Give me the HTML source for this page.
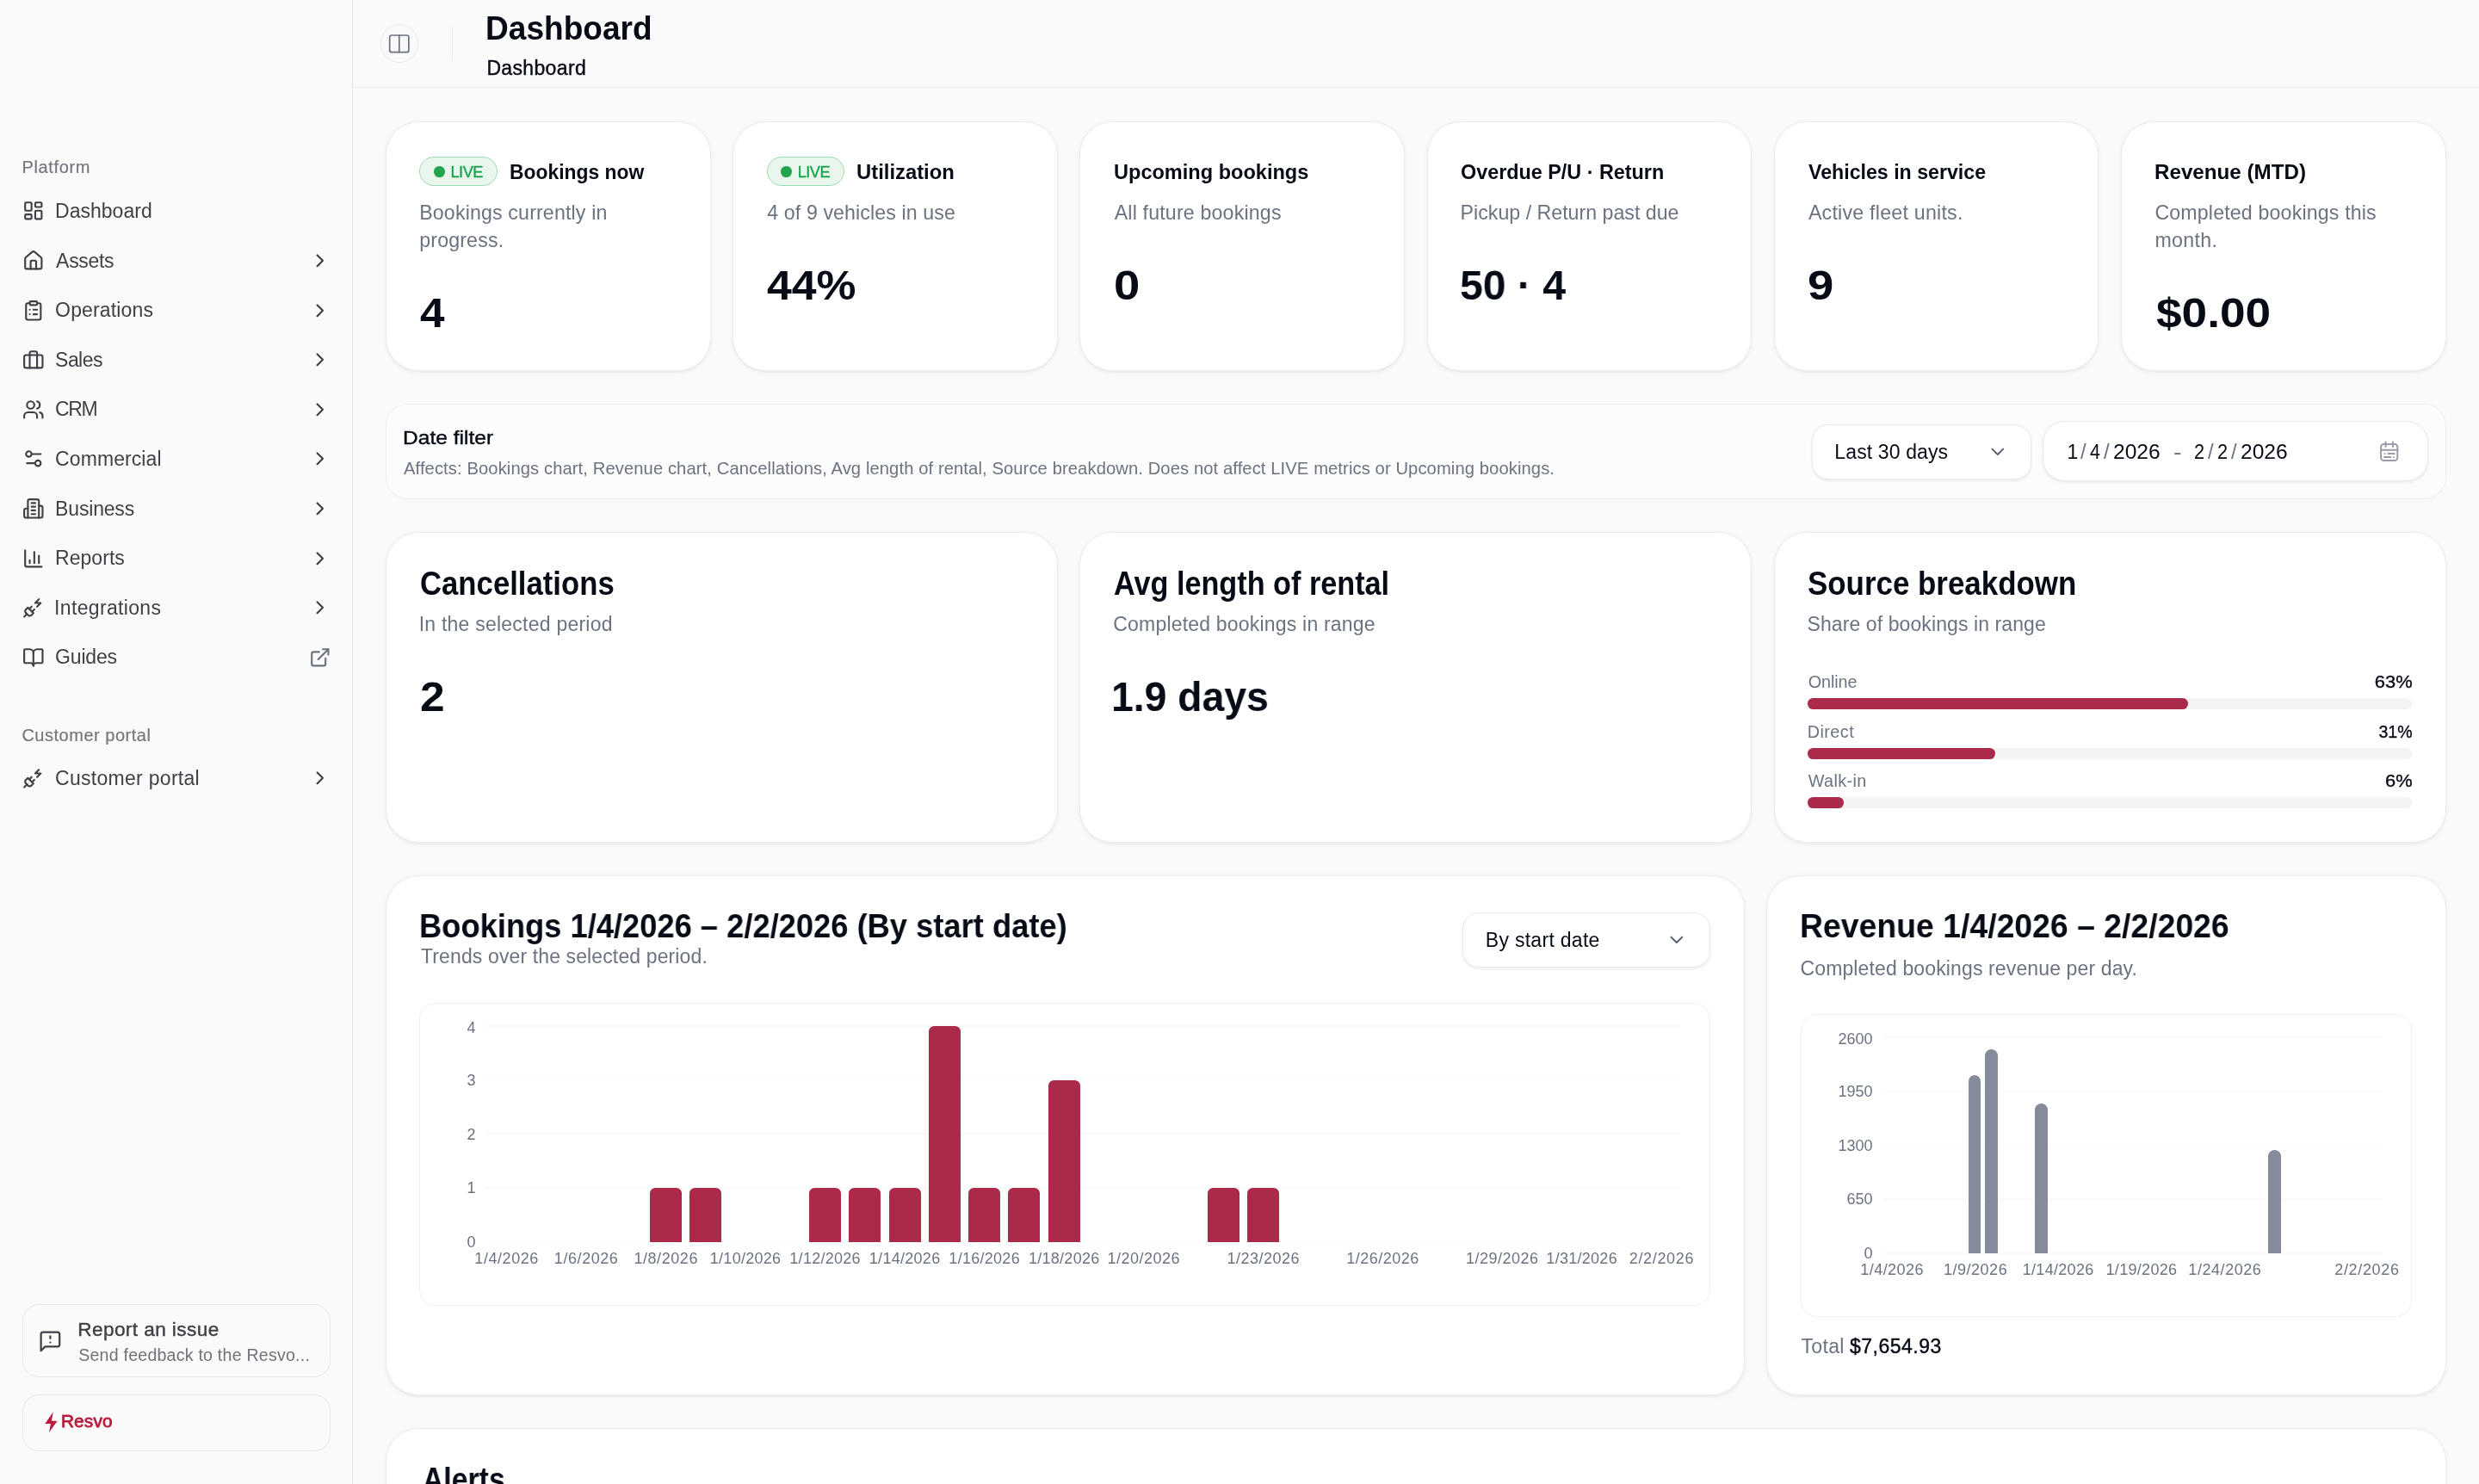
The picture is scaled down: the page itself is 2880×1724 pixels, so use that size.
<!DOCTYPE html>
<html lang="en">
<head>
<meta charset="utf-8">
<title>Dashboard</title>
<style>
html,body{margin:0;padding:0;overflow:hidden;}
body{width:2880px;height:1724px;overflow:hidden;position:relative;background:#fafafa;color:#070b16;
font-family:"Liberation Sans",sans-serif;-webkit-font-smoothing:antialiased;}
#root{position:absolute;left:0;top:0;width:2880px;height:1724px;overflow:hidden;will-change:transform;transform:translateZ(0);}
#root>div,#root>svg,#root>span{position:absolute;}
.t{white-space:nowrap;line-height:1;display:block;}
@media (max-width:1600px){#root{transform-origin:0 0;transform:scale(.5)}}
@media (min-width:1601px) and (max-width:2000px){#root{transform-origin:0 0;transform:scale(.625)}}
</style>
</head>
<body>
<div id="root">
<div style="left:0.00px;top:0.00px;width:408.80px;height:1724.00px;background:#fafafa;border-right:1.6px solid #e9e9ec;"></div>
<span id="t0" class="t" style="top:184.47px;font-size:20.00px;left:25.40px;color:#76767e;letter-spacing:0.657px;-webkit-text-stroke:0.2px;">Platform</span>
<svg style="left:25.60px;top:232.40px;" width="25.60" height="25.60" viewBox="0 0 24 24" fill="none" stroke="#3f3f46" stroke-width="2" stroke-linecap="round" stroke-linejoin="round"><rect width="7" height="9" x="3" y="3" rx="1"/><rect width="7" height="5" x="14" y="3" rx="1"/><rect width="7" height="9" x="14" y="12" rx="1"/><rect width="7" height="5" x="3" y="16" rx="1"/></svg>
<span id="t1" class="t" style="top:234.03px;font-size:23.00px;left:64.10px;color:#3f3f46;letter-spacing:0.009px;">Dashboard</span>
<svg style="left:25.60px;top:290.00px;" width="25.60" height="25.60" viewBox="0 0 24 24" fill="none" stroke="#3f3f46" stroke-width="2" stroke-linecap="round" stroke-linejoin="round"><path d="M15 21v-8a1 1 0 0 0-1-1h-4a1 1 0 0 0-1 1v8"/><path d="M3 10a2 2 0 0 1 .709-1.528l7-5.999a2 2 0 0 1 2.582 0l7 5.999A2 2 0 0 1 21 10v9a2 2 0 0 1-2 2H5a2 2 0 0 1-2-2z"/></svg>
<span id="t2" class="t" style="top:291.63px;font-size:23.00px;left:65.10px;color:#3f3f46;letter-spacing:-0.304px;">Assets</span>
<svg style="left:359.40px;top:290.00px;" width="25.60" height="25.60" viewBox="0 0 24 24" fill="none" stroke="#3f3f46" stroke-width="2" stroke-linecap="round" stroke-linejoin="round"><path d="m9 18 6-6-6-6"/></svg>
<svg style="left:25.60px;top:347.60px;" width="25.60" height="25.60" viewBox="0 0 24 24" fill="none" stroke="#3f3f46" stroke-width="2" stroke-linecap="round" stroke-linejoin="round"><rect width="8" height="4" x="8" y="2" rx="1" ry="1"/><path d="M16 4h2a2 2 0 0 1 2 2v14a2 2 0 0 1-2 2H6a2 2 0 0 1-2-2V6a2 2 0 0 1 2-2h2"/><path d="M12 11h4"/><path d="M12 16h4"/><path d="M8 11h.01"/><path d="M8 16h.01"/></svg>
<span id="t3" class="t" style="top:349.23px;font-size:23.00px;left:64.10px;color:#3f3f46;letter-spacing:0.144px;">Operations</span>
<svg style="left:359.40px;top:347.60px;" width="25.60" height="25.60" viewBox="0 0 24 24" fill="none" stroke="#3f3f46" stroke-width="2" stroke-linecap="round" stroke-linejoin="round"><path d="m9 18 6-6-6-6"/></svg>
<svg style="left:25.60px;top:405.20px;" width="25.60" height="25.60" viewBox="0 0 24 24" fill="none" stroke="#3f3f46" stroke-width="2" stroke-linecap="round" stroke-linejoin="round"><rect width="20" height="14" x="2" y="7" rx="2" ry="2"/><path d="M16 21V5a2 2 0 0 0-2-2h-4a2 2 0 0 0-2 2v16"/></svg>
<span id="t4" class="t" style="top:406.83px;font-size:23.00px;left:64.10px;color:#3f3f46;letter-spacing:-0.558px;">Sales</span>
<svg style="left:359.40px;top:405.20px;" width="25.60" height="25.60" viewBox="0 0 24 24" fill="none" stroke="#3f3f46" stroke-width="2" stroke-linecap="round" stroke-linejoin="round"><path d="m9 18 6-6-6-6"/></svg>
<svg style="left:25.60px;top:462.80px;" width="25.60" height="25.60" viewBox="0 0 24 24" fill="none" stroke="#3f3f46" stroke-width="2" stroke-linecap="round" stroke-linejoin="round"><path d="M16 21v-2a4 4 0 0 0-4-4H6a4 4 0 0 0-4 4v2"/><circle cx="9" cy="7" r="4"/><path d="M22 21v-2a4 4 0 0 0-3-3.87"/><path d="M16 3.13a4 4 0 0 1 0 7.75"/></svg>
<span id="t5" class="t" style="top:464.43px;font-size:23.00px;left:64.10px;color:#3f3f46;letter-spacing:-1.360px;">CRM</span>
<svg style="left:359.40px;top:462.80px;" width="25.60" height="25.60" viewBox="0 0 24 24" fill="none" stroke="#3f3f46" stroke-width="2" stroke-linecap="round" stroke-linejoin="round"><path d="m9 18 6-6-6-6"/></svg>
<svg style="left:25.60px;top:520.40px;" width="25.60" height="25.60" viewBox="0 0 24 24" fill="none" stroke="#3f3f46" stroke-width="2" stroke-linecap="round" stroke-linejoin="round"><path d="M20 7h-9"/><path d="M14 17H5"/><circle cx="17" cy="17" r="3"/><circle cx="7" cy="7" r="3"/></svg>
<span id="t6" class="t" style="top:522.03px;font-size:23.00px;left:64.10px;color:#3f3f46;letter-spacing:0.081px;">Commercial</span>
<svg style="left:359.40px;top:520.40px;" width="25.60" height="25.60" viewBox="0 0 24 24" fill="none" stroke="#3f3f46" stroke-width="2" stroke-linecap="round" stroke-linejoin="round"><path d="m9 18 6-6-6-6"/></svg>
<svg style="left:25.60px;top:578.00px;" width="25.60" height="25.60" viewBox="0 0 24 24" fill="none" stroke="#3f3f46" stroke-width="2" stroke-linecap="round" stroke-linejoin="round"><path d="M6 22V4a2 2 0 0 1 2-2h8a2 2 0 0 1 2 2v18Z"/><path d="M6 12H4a2 2 0 0 0-2 2v6a2 2 0 0 0 2 2h2"/><path d="M18 9h2a2 2 0 0 1 2 2v9a2 2 0 0 1-2 2h-2"/><path d="M10 6h4"/><path d="M10 10h4"/><path d="M10 14h4"/><path d="M10 18h4"/></svg>
<span id="t7" class="t" style="top:579.63px;font-size:23.00px;left:64.10px;color:#3f3f46;letter-spacing:-0.175px;">Business</span>
<svg style="left:359.40px;top:578.00px;" width="25.60" height="25.60" viewBox="0 0 24 24" fill="none" stroke="#3f3f46" stroke-width="2" stroke-linecap="round" stroke-linejoin="round"><path d="m9 18 6-6-6-6"/></svg>
<svg style="left:25.60px;top:635.60px;" width="25.60" height="25.60" viewBox="0 0 24 24" fill="none" stroke="#3f3f46" stroke-width="2" stroke-linecap="round" stroke-linejoin="round"><path d="M3 3v16a2 2 0 0 0 2 2h16"/><path d="M18 17V9"/><path d="M13 17V5"/><path d="M8 17v-3"/></svg>
<span id="t8" class="t" style="top:637.23px;font-size:23.00px;left:64.10px;color:#3f3f46;letter-spacing:0.028px;">Reports</span>
<svg style="left:359.40px;top:635.60px;" width="25.60" height="25.60" viewBox="0 0 24 24" fill="none" stroke="#3f3f46" stroke-width="2" stroke-linecap="round" stroke-linejoin="round"><path d="m9 18 6-6-6-6"/></svg>
<svg style="left:25.60px;top:693.20px;" width="25.60" height="25.60" viewBox="0 0 24 24" fill="none" stroke="#3f3f46" stroke-width="2" stroke-linecap="round" stroke-linejoin="round"><path d="M6.3 20.3a2.4 2.4 0 0 0 3.4 0L12 18l-6-6-2.3 2.3a2.4 2.4 0 0 0 0 3.4Z"/><path d="m2 22 3-3"/><path d="M7.5 13.5 10 11"/><path d="M10.5 16.5 13 14"/><path d="m18 3-4 4h6l-4 4"/></svg>
<span id="t9" class="t" style="top:694.83px;font-size:23.00px;left:63.10px;color:#3f3f46;letter-spacing:0.328px;">Integrations</span>
<svg style="left:359.40px;top:693.20px;" width="25.60" height="25.60" viewBox="0 0 24 24" fill="none" stroke="#3f3f46" stroke-width="2" stroke-linecap="round" stroke-linejoin="round"><path d="m9 18 6-6-6-6"/></svg>
<svg style="left:25.60px;top:750.80px;" width="25.60" height="25.60" viewBox="0 0 24 24" fill="none" stroke="#3f3f46" stroke-width="2" stroke-linecap="round" stroke-linejoin="round"><path d="M12 7v14"/><path d="M3 18a1 1 0 0 1-1-1V4a1 1 0 0 1 1-1h5a4 4 0 0 1 4 4 4 4 0 0 1 4-4h5a1 1 0 0 1 1 1v13a1 1 0 0 1-1 1h-6a3 3 0 0 0-3 3 3 3 0 0 0-3-3z"/></svg>
<span id="t10" class="t" style="top:752.43px;font-size:23.00px;left:64.10px;color:#3f3f46;letter-spacing:-0.195px;">Guides</span>
<svg style="left:359.40px;top:751.30px;" width="25.60" height="25.60" viewBox="0 0 24 24" fill="none" stroke="#6b7280" stroke-width="2" stroke-linecap="round" stroke-linejoin="round"><path d="M15 3h6v6"/><path d="M10 14 21 3"/><path d="M18 13v6a2 2 0 0 1-2 2H5a2 2 0 0 1-2-2V8a2 2 0 0 1 2-2h6"/></svg>
<span id="t11" class="t" style="top:843.87px;font-size:20.00px;left:25.40px;color:#76767e;letter-spacing:0.519px;-webkit-text-stroke:0.2px;">Customer portal</span>
<svg style="left:25.60px;top:890.80px;" width="25.60" height="25.60" viewBox="0 0 24 24" fill="none" stroke="#3f3f46" stroke-width="2" stroke-linecap="round" stroke-linejoin="round"><path d="M6.3 20.3a2.4 2.4 0 0 0 3.4 0L12 18l-6-6-2.3 2.3a2.4 2.4 0 0 0 0 3.4Z"/><path d="m2 22 3-3"/><path d="M7.5 13.5 10 11"/><path d="M10.5 16.5 13 14"/><path d="m18 3-4 4h6l-4 4"/></svg>
<span id="t12" class="t" style="top:893.23px;font-size:23.00px;left:64.10px;color:#3f3f46;letter-spacing:0.285px;">Customer portal</span>
<svg style="left:359.40px;top:890.80px;" width="25.60" height="25.60" viewBox="0 0 24 24" fill="none" stroke="#3f3f46" stroke-width="2" stroke-linecap="round" stroke-linejoin="round"><path d="m9 18 6-6-6-6"/></svg>
<div style="left:25.60px;top:1514.60px;width:358.40px;height:85.60px;border:1.6px solid #e8e8ec;border-radius:19.2px;box-sizing:border-box;"></div>
<svg style="left:44.20px;top:1544.10px;" width="28.80" height="28.80" viewBox="0 0 24 24" fill="none" stroke="#3f3f46" stroke-width="1.85" stroke-linecap="round" stroke-linejoin="round"><path d="M21 15a2 2 0 0 1-2 2H7l-4 4V5a2 2 0 0 1 2-2h14a2 2 0 0 1 2 2z"/><path d="M12 7v2"/><path d="M12 13h.01"/></svg>
<span id="t13" class="t" style="top:1534.07px;font-size:22.60px;left:90.20px;-webkit-text-stroke:0.41px;color:#3f3f46;letter-spacing:0.416px;">Report an issue</span>
<span id="t14" class="t" style="top:1565.21px;font-size:19.60px;left:91.20px;color:#71717a;letter-spacing:0.219px;">Send feedback to the Resvo...</span>
<div style="left:25.60px;top:1619.60px;width:358.40px;height:66.40px;border:1.6px solid #e8e8ec;border-radius:19.2px;box-sizing:border-box;"></div>
<svg style="left:50px;top:1638px" width="20" height="28" viewBox="50 1638 20 28"><polygon fill="#b91c3c" points="61.8,1640.2 52.3,1653.9 58.9,1654.1 57.0,1664.0 66.5,1651.1 59.9,1650.6"/></svg>
<span id="t15" class="t" style="top:1641.49px;font-size:20.80px;left:70.90px;color:#b91c3c;letter-spacing:0.180px;-webkit-text-stroke:0.8px;">Resvo</span>
<div style="left:409.60px;top:0.00px;width:2470.40px;height:101.20px;border-bottom:1.6px solid #ededf0;"></div>
<div style="left:441.60px;top:28.40px;width:44.80px;height:44.80px;border:1.6px solid #ececf0;border-radius:50%;box-sizing:border-box;"></div>
<svg style="left:451.2px;top:38.4px" width="25.6" height="25.6" viewBox="0 0 24 24" fill="none" stroke="#6b7280" stroke-width="1.6" stroke-linecap="round" stroke-linejoin="round"><rect x="1.6" y="2.8" width="20.8" height="18.4" rx="2.2"/><path d="M12 2.8v18.4"/></svg>
<div style="left:524.60px;top:30.80px;width:1.60px;height:39.20px;background:#e8e8ec;"></div>
<span id="t16" class="t" style="top:13.86px;font-size:38.20px;left:564.46px;transform-origin:0 0;transform:scaleX(0.9711);font-weight:700;">Dashboard</span>
<span id="t17" class="t" style="top:67.83px;font-size:23.00px;left:565.40px;-webkit-text-stroke:0.41px;letter-spacing:0.347px;">Dashboard</span>
<div style="left:448.00px;top:140.80px;width:377.60px;height:290.00px;background:#fff;border:1.6px solid #e9ebef;border-radius:38.4px;box-sizing:border-box;box-shadow:0 1.6px 4.8px rgba(15,23,42,.055),0 1.6px 2.4px rgba(15,23,42,.025);"></div>
<div style="left:851.20px;top:140.80px;width:377.60px;height:290.00px;background:#fff;border:1.6px solid #e9ebef;border-radius:38.4px;box-sizing:border-box;box-shadow:0 1.6px 4.8px rgba(15,23,42,.055),0 1.6px 2.4px rgba(15,23,42,.025);"></div>
<div style="left:1254.40px;top:140.80px;width:377.60px;height:290.00px;background:#fff;border:1.6px solid #e9ebef;border-radius:38.4px;box-sizing:border-box;box-shadow:0 1.6px 4.8px rgba(15,23,42,.055),0 1.6px 2.4px rgba(15,23,42,.025);"></div>
<div style="left:1657.60px;top:140.80px;width:377.60px;height:290.00px;background:#fff;border:1.6px solid #e9ebef;border-radius:38.4px;box-sizing:border-box;box-shadow:0 1.6px 4.8px rgba(15,23,42,.055),0 1.6px 2.4px rgba(15,23,42,.025);"></div>
<div style="left:2060.80px;top:140.80px;width:377.60px;height:290.00px;background:#fff;border:1.6px solid #e9ebef;border-radius:38.4px;box-sizing:border-box;box-shadow:0 1.6px 4.8px rgba(15,23,42,.055),0 1.6px 2.4px rgba(15,23,42,.025);"></div>
<div style="left:2464.00px;top:140.80px;width:377.60px;height:290.00px;background:#fff;border:1.6px solid #e9ebef;border-radius:38.4px;box-sizing:border-box;box-shadow:0 1.6px 4.8px rgba(15,23,42,.055),0 1.6px 2.4px rgba(15,23,42,.025);"></div>
<div style="left:487.40px;top:182.20px;width:90.40px;height:33.60px;background:#e9f6ee;border:1.6px solid #9bdcb0;border-radius:17px;box-sizing:border-box;"></div>
<div style="left:504.00px;top:192.80px;width:12.80px;height:12.80px;background:#22a34d;border-radius:50%;"></div>
<span id="t18" class="t" style="top:190.99px;font-size:18.20px;left:523.50px;-webkit-text-stroke:0.33px;color:#16a34a;letter-spacing:-0.500px;">LIVE</span>
<span id="t19" class="t" style="top:188.38px;font-size:24.60px;left:592.47px;transform-origin:0 0;transform:scaleX(0.9296);font-weight:700;">Bookings now</span>
<span id="t20" class="t" style="top:235.66px;font-size:23.20px;left:487.20px;color:#6b7280;letter-spacing:0.148px;">Bookings currently in</span>
<span id="t21" class="t" style="top:267.56px;font-size:23.20px;left:487.20px;color:#6b7280;letter-spacing:0.161px;">progress.</span>
<span id="t22" class="t" style="top:338.96px;font-size:48.60px;left:488.20px;transform-origin:0 0;transform:scaleX(1.0556);font-weight:700;">4</span>
<div style="left:890.60px;top:182.20px;width:90.40px;height:33.60px;background:#e9f6ee;border:1.6px solid #9bdcb0;border-radius:17px;box-sizing:border-box;"></div>
<div style="left:907.20px;top:192.80px;width:12.80px;height:12.80px;background:#22a34d;border-radius:50%;"></div>
<span id="t23" class="t" style="top:190.99px;font-size:18.20px;left:926.70px;-webkit-text-stroke:0.33px;color:#16a34a;letter-spacing:-0.500px;">LIVE</span>
<span id="t24" class="t" style="top:188.38px;font-size:24.60px;left:994.63px;transform-origin:0 0;transform:scaleX(0.9691);font-weight:700;">Utilization</span>
<span id="t25" class="t" style="top:235.66px;font-size:23.20px;left:891.30px;color:#6b7280;letter-spacing:0.093px;">4 of 9 vehicles in use</span>
<span id="t26" class="t" style="top:307.06px;font-size:48.60px;left:891.10px;transform-origin:0 0;transform:scaleX(1.0640);font-weight:700;">44%</span>
<span id="t27" class="t" style="top:188.08px;font-size:24.60px;left:1293.74px;transform-origin:0 0;transform:scaleX(0.9574);font-weight:700;">Upcoming bookings</span>
<span id="t28" class="t" style="top:235.66px;font-size:23.20px;left:1294.70px;color:#6b7280;letter-spacing:0.168px;">All future bookings</span>
<span id="t29" class="t" style="top:307.06px;font-size:48.60px;left:1293.68px;transform-origin:0 0;transform:scaleX(1.1200);font-weight:700;">0</span>
<span id="t30" class="t" style="top:188.08px;font-size:24.60px;left:1696.65px;transform-origin:0 0;transform:scaleX(0.9498);font-weight:700;">Overdue P/U · Return</span>
<span id="t31" class="t" style="top:235.66px;font-size:23.20px;left:1696.60px;color:#6b7280;">Pickup / Return past due</span>
<span id="t32" class="t" style="top:307.06px;font-size:48.60px;left:1696.31px;transform-origin:0 0;transform:scaleX(0.9900);font-weight:700;">50 · 4</span>
<span id="t33" class="t" style="top:188.08px;font-size:24.60px;left:2100.90px;transform-origin:0 0;transform:scaleX(0.9418);font-weight:700;">Vehicles in service</span>
<span id="t34" class="t" style="top:235.66px;font-size:23.20px;left:2100.90px;color:#6b7280;letter-spacing:0.231px;">Active fleet units.</span>
<span id="t35" class="t" style="top:307.06px;font-size:48.60px;left:2099.78px;transform-origin:0 0;transform:scaleX(1.1200);font-weight:700;">9</span>
<span id="t36" class="t" style="top:188.08px;font-size:24.60px;left:2503.42px;transform-origin:0 0;transform:scaleX(0.9835);font-weight:700;">Revenue (MTD)</span>
<span id="t37" class="t" style="top:235.66px;font-size:23.20px;left:2503.40px;color:#6b7280;letter-spacing:0.153px;">Completed bookings this</span>
<span id="t38" class="t" style="top:267.56px;font-size:23.20px;left:2503.40px;color:#6b7280;letter-spacing:0.311px;">month.</span>
<span id="t39" class="t" style="top:338.96px;font-size:48.60px;left:2504.60px;transform-origin:0 0;transform:scaleX(1.0947);font-weight:700;">$0.00</span>
<div style="left:448.00px;top:469.00px;width:2393.60px;height:110.60px;background:#fcfcfc;border:1.6px solid #efeff2;border-radius:25.6px;box-sizing:border-box;"></div>
<span id="t40" class="t" style="top:498.18px;font-size:22.00px;left:467.88px;transform-origin:0 0;transform:scaleX(1.1162);-webkit-text-stroke:0.40px;">Date filter</span>
<span id="t41" class="t" style="top:534.40px;font-size:20.20px;left:469.00px;color:#6b7280;letter-spacing:0.097px;">Affects: Bookings chart, Revenue chart, Cancellations, Avg length of rental, Source breakdown. Does not affect LIVE metrics or Upcoming bookings.</span>
<div style="left:2105.20px;top:493.40px;width:255.20px;height:63.40px;background:#fff;border:1.6px solid #e9e9ee;box-sizing:border-box;box-shadow:0 1.6px 3.2px rgba(15,23,42,.07);border-radius:19.2px;"></div>
<span id="t42" class="t" style="top:513.83px;font-size:23.00px;left:2131.30px;letter-spacing:0.126px;">Last 30 days</span>
<svg style="left:2308.00px;top:512.20px;" width="25.60" height="25.60" viewBox="0 0 24 24" fill="none" stroke="#596070" stroke-width="1.9" stroke-linecap="round" stroke-linejoin="round"><path d="m6 9 6 6 6-6"/></svg>
<div style="left:2373.20px;top:489.20px;width:447.60px;height:70.20px;background:#fff;border:1.6px solid #e9e9ee;box-sizing:border-box;box-shadow:0 1.6px 3.2px rgba(15,23,42,.07);border-radius:25.6px;"></div>
<span id="t43" class="t" style="top:513.83px;font-size:23.00px;left:2401.40px;">1</span>
<span id="t44" class="t" style="top:513.83px;font-size:23.00px;left:2416.90px;transform-origin:0 0;transform:scaleX(1.0429);color:#6b7280;">/</span>
<span id="t45" class="t" style="top:513.83px;font-size:23.00px;left:2427.80px;transform-origin:0 0;transform:scaleX(0.9308);">4</span>
<span id="t46" class="t" style="top:513.83px;font-size:23.00px;left:2443.90px;transform-origin:0 0;transform:scaleX(1.0429);color:#6b7280;">/</span>
<span id="t47" class="t" style="top:513.83px;font-size:23.00px;left:2454.53px;transform-origin:0 0;transform:scaleX(1.0694);">2026</span>
<span id="t48" class="t" style="top:513.83px;font-size:23.00px;left:2525.15px;transform-origin:0 0;transform:scaleX(1.2500);color:#6b7280;">-</span>
<span id="t49" class="t" style="top:513.83px;font-size:23.00px;left:2549.05px;transform-origin:0 0;transform:scaleX(0.9455);">2</span>
<span id="t50" class="t" style="top:513.83px;font-size:23.00px;left:2565.20px;transform-origin:0 0;transform:scaleX(1.0429);color:#6b7280;">/</span>
<span id="t51" class="t" style="top:513.83px;font-size:23.00px;left:2575.75px;transform-origin:0 0;transform:scaleX(0.9455);">2</span>
<span id="t52" class="t" style="top:513.83px;font-size:23.00px;left:2592.00px;transform-origin:0 0;transform:scaleX(1.0429);color:#6b7280;">/</span>
<span id="t53" class="t" style="top:513.83px;font-size:23.00px;left:2602.53px;transform-origin:0 0;transform:scaleX(1.0694);">2026</span>
<svg style="left:2760px;top:508px" width="32" height="32" viewBox="2760 508 32 32" fill="none" stroke="#9b9ca8" stroke-width="2" stroke-linecap="round" stroke-linejoin="round"><rect x="2766.1" y="516" width="19.2" height="19" rx="3.2"/><path d="M2771.5 513.4v5.7M2780 513.4v5.7M2766.1 522.7h19.2M2770.5 526.9h.01M2774.4 526.9h7.4M2769.9 531.1h7.5M2781 531.1h.01"/></svg>
<div style="left:448.00px;top:618.00px;width:780.80px;height:360.80px;background:#fff;border:1.6px solid #e9ebef;border-radius:38.4px;box-sizing:border-box;box-shadow:0 1.6px 4.8px rgba(15,23,42,.055),0 1.6px 2.4px rgba(15,23,42,.025);"></div>
<div style="left:1254.40px;top:618.00px;width:780.80px;height:360.80px;background:#fff;border:1.6px solid #e9ebef;border-radius:38.4px;box-sizing:border-box;box-shadow:0 1.6px 4.8px rgba(15,23,42,.055),0 1.6px 2.4px rgba(15,23,42,.025);"></div>
<div style="left:2060.80px;top:618.00px;width:780.80px;height:360.80px;background:#fff;border:1.6px solid #e9ebef;border-radius:38.4px;box-sizing:border-box;box-shadow:0 1.6px 4.8px rgba(15,23,42,.055),0 1.6px 2.4px rgba(15,23,42,.025);"></div>
<span id="t54" class="t" style="top:658.73px;font-size:38.60px;left:487.80px;transform-origin:0 0;transform:scaleX(0.8998);font-weight:700;">Cancellations</span>
<span id="t55" class="t" style="top:714.13px;font-size:23.00px;left:486.70px;color:#6b7280;letter-spacing:0.232px;">In the selected period</span>
<span id="t56" class="t" style="top:784.76px;font-size:48.60px;left:487.64px;transform-origin:0 0;transform:scaleX(1.0600);font-weight:700;">2</span>
<span id="t57" class="t" style="top:658.73px;font-size:38.60px;left:1294.30px;transform-origin:0 0;transform:scaleX(0.8873);font-weight:700;">Avg length of rental</span>
<span id="t58" class="t" style="top:714.13px;font-size:23.00px;left:1293.30px;color:#6b7280;letter-spacing:0.196px;">Completed bookings in range</span>
<span id="t59" class="t" style="top:784.76px;font-size:48.60px;left:1291.44px;transform-origin:0 0;transform:scaleX(0.9532);font-weight:700;">1.9 days</span>
<span id="t60" class="t" style="top:658.73px;font-size:38.60px;left:2099.60px;transform-origin:0 0;transform:scaleX(0.9049);font-weight:700;">Source breakdown</span>
<span id="t61" class="t" style="top:714.33px;font-size:23.00px;left:2099.50px;color:#6b7280;letter-spacing:0.095px;">Share of bookings in range</span>
<span id="t62" class="t" style="top:782.64px;font-size:19.80px;left:2100.70px;color:#6b7280;letter-spacing:-0.076px;">Online</span>
<span id="t63" class="t" style="top:782.64px;font-size:19.80px;right:77.75px;transform-origin:100% 0;transform:scaleX(1.1052);-webkit-text-stroke:0.36px;">63%</span>
<div style="left:2100.00px;top:811.00px;width:701.60px;height:12.80px;background:#f3f4f6;border-radius:6.4px;"></div>
<div style="left:2100.00px;top:811.00px;width:442.01px;height:12.80px;background:#ac2a49;border-radius:6.4px;"></div>
<span id="t64" class="t" style="top:840.74px;font-size:19.80px;left:2099.70px;color:#6b7280;letter-spacing:0.468px;">Direct</span>
<span id="t65" class="t" style="top:840.74px;font-size:19.80px;right:77.82px;transform-origin:100% 0;transform:scaleX(0.9871);-webkit-text-stroke:0.36px;">31%</span>
<div style="left:2100.00px;top:868.90px;width:701.60px;height:12.80px;background:#f3f4f6;border-radius:6.4px;"></div>
<div style="left:2100.00px;top:868.90px;width:217.50px;height:12.80px;background:#ac2a49;border-radius:6.4px;"></div>
<span id="t66" class="t" style="top:897.64px;font-size:19.80px;left:2100.70px;color:#6b7280;letter-spacing:0.383px;">Walk-in</span>
<span id="t67" class="t" style="top:897.64px;font-size:19.80px;right:77.75px;transform-origin:100% 0;transform:scaleX(1.1036);-webkit-text-stroke:0.36px;">6%</span>
<div style="left:2100.00px;top:926.40px;width:701.60px;height:12.80px;background:#f3f4f6;border-radius:6.4px;"></div>
<div style="left:2100.00px;top:926.40px;width:41.75px;height:12.80px;background:#ac2a49;border-radius:6.4px;"></div>
<div style="left:448.00px;top:1016.80px;width:1578.80px;height:604.00px;background:#fff;border:1.6px solid #e9ebef;border-radius:38.4px;box-sizing:border-box;box-shadow:0 1.6px 4.8px rgba(15,23,42,.055),0 1.6px 2.4px rgba(15,23,42,.025);"></div>
<div style="left:2052.40px;top:1016.80px;width:789.20px;height:604.00px;background:#fff;border:1.6px solid #e9ebef;border-radius:38.4px;box-sizing:border-box;box-shadow:0 1.6px 4.8px rgba(15,23,42,.055),0 1.6px 2.4px rgba(15,23,42,.025);"></div>
<span id="t68" class="t" style="top:1056.73px;font-size:38.60px;left:487.12px;transform-origin:0 0;transform:scaleX(0.9410);font-weight:700;">Bookings 1/4/2026 – 2/2/2026 (By start date)</span>
<span id="t69" class="t" style="top:1099.73px;font-size:23.00px;left:489.00px;color:#6b7280;letter-spacing:0.122px;">Trends over the selected period.</span>
<div style="left:1699.00px;top:1060.20px;width:287.80px;height:64.00px;background:#fff;border:1.6px solid #e9e9ee;box-sizing:border-box;box-shadow:0 1.6px 3.2px rgba(15,23,42,.07);border-radius:19.2px;"></div>
<span id="t70" class="t" style="top:1080.93px;font-size:23.00px;left:1725.80px;letter-spacing:0.290px;">By start date</span>
<svg style="left:1934.50px;top:1079.00px;" width="25.60" height="25.60" viewBox="0 0 24 24" fill="none" stroke="#596070" stroke-width="1.9" stroke-linecap="round" stroke-linejoin="round"><path d="m6 9 6 6 6-6"/></svg>
<div style="left:486.80px;top:1164.60px;width:1500.00px;height:352.00px;border:1.6px solid #f0f0f3;border-radius:19.2px;box-sizing:border-box;"></div>
<div style="left:565.20px;top:1441.80px;width:1388.00px;height:1.60px;background:#f9f9fa;"></div>
<span id="t71" class="t" style="top:1433.76px;font-size:18.00px;right:2327.59px;color:#6b7280;">0</span>
<div style="left:565.20px;top:1379.10px;width:1388.00px;height:1.60px;background:#f9f9fa;"></div>
<span id="t72" class="t" style="top:1371.36px;font-size:18.00px;right:2327.59px;color:#6b7280;">1</span>
<div style="left:565.20px;top:1316.40px;width:1388.00px;height:1.60px;background:#f9f9fa;"></div>
<span id="t73" class="t" style="top:1308.86px;font-size:18.00px;right:2327.59px;color:#6b7280;">2</span>
<div style="left:565.20px;top:1253.70px;width:1388.00px;height:1.60px;background:#f9f9fa;"></div>
<span id="t74" class="t" style="top:1246.36px;font-size:18.00px;right:2327.59px;color:#6b7280;">3</span>
<div style="left:565.20px;top:1191.00px;width:1388.00px;height:1.60px;background:#f9f9fa;"></div>
<span id="t75" class="t" style="top:1184.86px;font-size:18.00px;right:2327.59px;color:#6b7280;">4</span>
<div style="left:754.90px;top:1379.90px;width:37.00px;height:62.70px;background:#ac2a49;border-radius:6.4px 6.4px 0 0;"></div>
<div style="left:801.17px;top:1379.90px;width:37.00px;height:62.70px;background:#ac2a49;border-radius:6.4px 6.4px 0 0;"></div>
<div style="left:939.97px;top:1379.90px;width:37.00px;height:62.70px;background:#ac2a49;border-radius:6.4px 6.4px 0 0;"></div>
<div style="left:986.23px;top:1379.90px;width:37.00px;height:62.70px;background:#ac2a49;border-radius:6.4px 6.4px 0 0;"></div>
<div style="left:1032.50px;top:1379.90px;width:37.00px;height:62.70px;background:#ac2a49;border-radius:6.4px 6.4px 0 0;"></div>
<div style="left:1078.77px;top:1191.80px;width:37.00px;height:250.80px;background:#ac2a49;border-radius:6.4px 6.4px 0 0;"></div>
<div style="left:1125.03px;top:1379.90px;width:37.00px;height:62.70px;background:#ac2a49;border-radius:6.4px 6.4px 0 0;"></div>
<div style="left:1171.30px;top:1379.90px;width:37.00px;height:62.70px;background:#ac2a49;border-radius:6.4px 6.4px 0 0;"></div>
<div style="left:1217.57px;top:1254.50px;width:37.00px;height:188.10px;background:#ac2a49;border-radius:6.4px 6.4px 0 0;"></div>
<div style="left:1402.63px;top:1379.90px;width:37.00px;height:62.70px;background:#ac2a49;border-radius:6.4px 6.4px 0 0;"></div>
<div style="left:1448.90px;top:1379.90px;width:37.00px;height:62.70px;background:#ac2a49;border-radius:6.4px 6.4px 0 0;"></div>
<span id="t76" class="t" style="top:1452.86px;font-size:18.00px;left:588.61px;transform:translateX(-50%);color:#6b7280;letter-spacing:0.563px;">1/4/2026</span>
<span id="t77" class="t" style="top:1452.86px;font-size:18.00px;left:681.15px;transform:translateX(-50%);color:#6b7280;letter-spacing:0.563px;">1/6/2026</span>
<span id="t78" class="t" style="top:1452.86px;font-size:18.00px;left:773.68px;transform:translateX(-50%);color:#6b7280;letter-spacing:0.563px;">1/8/2026</span>
<span id="t79" class="t" style="top:1452.86px;font-size:18.00px;left:866.07px;transform:translateX(-50%);color:#6b7280;letter-spacing:0.279px;">1/10/2026</span>
<span id="t80" class="t" style="top:1452.86px;font-size:18.00px;left:958.61px;transform:translateX(-50%);color:#6b7280;letter-spacing:0.279px;">1/12/2026</span>
<span id="t81" class="t" style="top:1452.86px;font-size:18.00px;left:1051.14px;transform:translateX(-50%);color:#6b7280;letter-spacing:0.279px;">1/14/2026</span>
<span id="t82" class="t" style="top:1452.86px;font-size:18.00px;left:1143.67px;transform:translateX(-50%);color:#6b7280;letter-spacing:0.279px;">1/16/2026</span>
<span id="t83" class="t" style="top:1452.86px;font-size:18.00px;left:1236.21px;transform:translateX(-50%);color:#6b7280;letter-spacing:0.279px;">1/18/2026</span>
<span id="t84" class="t" style="top:1452.86px;font-size:18.00px;left:1328.85px;transform:translateX(-50%);color:#6b7280;letter-spacing:0.492px;">1/20/2026</span>
<span id="t85" class="t" style="top:1452.86px;font-size:18.00px;left:1467.65px;transform:translateX(-50%);color:#6b7280;letter-spacing:0.492px;">1/23/2026</span>
<span id="t86" class="t" style="top:1452.86px;font-size:18.00px;left:1606.45px;transform:translateX(-50%);color:#6b7280;letter-spacing:0.492px;">1/26/2026</span>
<span id="t87" class="t" style="top:1452.86px;font-size:18.00px;left:1745.25px;transform:translateX(-50%);color:#6b7280;letter-spacing:0.492px;">1/29/2026</span>
<span id="t88" class="t" style="top:1452.86px;font-size:18.00px;left:1837.67px;transform:translateX(-50%);color:#6b7280;letter-spacing:0.279px;">1/31/2026</span>
<span id="t89" class="t" style="top:1452.86px;font-size:18.00px;left:1930.40px;transform:translateX(-50%);color:#6b7280;letter-spacing:0.663px;">2/2/2026</span>
<span id="t90" class="t" style="top:1056.73px;font-size:38.60px;left:2090.56px;transform-origin:0 0;transform:scaleX(0.9688);font-weight:700;">Revenue 1/4/2026 – 2/2/2026</span>
<span id="t91" class="t" style="top:1114.13px;font-size:23.00px;left:2091.50px;color:#6b7280;letter-spacing:0.130px;">Completed bookings revenue per day.</span>
<div style="left:2091.60px;top:1178.40px;width:710.40px;height:352.00px;border:1.6px solid #f0f0f3;border-radius:19.2px;box-sizing:border-box;"></div>
<div style="left:2187.20px;top:1455.00px;width:580.80px;height:1.60px;background:#f9f9fa;"></div>
<span id="t92" class="t" style="top:1446.96px;font-size:18.00px;right:704.59px;color:#6b7280;">0</span>
<div style="left:2187.20px;top:1392.30px;width:580.80px;height:1.60px;background:#f9f9fa;"></div>
<span id="t93" class="t" style="top:1384.26px;font-size:18.00px;right:704.59px;color:#6b7280;">650</span>
<div style="left:2187.20px;top:1329.60px;width:580.80px;height:1.60px;background:#f9f9fa;"></div>
<span id="t94" class="t" style="top:1321.56px;font-size:18.00px;right:704.59px;color:#6b7280;">1300</span>
<div style="left:2187.20px;top:1266.90px;width:580.80px;height:1.60px;background:#f9f9fa;"></div>
<span id="t95" class="t" style="top:1258.86px;font-size:18.00px;right:704.59px;color:#6b7280;">1950</span>
<div style="left:2187.20px;top:1204.20px;width:580.80px;height:1.60px;background:#f9f9fa;"></div>
<span id="t96" class="t" style="top:1198.46px;font-size:18.00px;right:704.59px;color:#6b7280;">2600</span>
<div style="left:2286.78px;top:1248.90px;width:14.70px;height:206.90px;background:#868b9c;border-radius:7.3px 7.3px 0 0;"></div>
<div style="left:2306.14px;top:1219.10px;width:14.70px;height:236.70px;background:#868b9c;border-radius:7.3px 7.3px 0 0;"></div>
<div style="left:2364.22px;top:1281.60px;width:14.70px;height:174.20px;background:#868b9c;border-radius:7.3px 7.3px 0 0;"></div>
<div style="left:2635.26px;top:1336.30px;width:14.70px;height:119.50px;background:#868b9c;border-radius:7.3px 7.3px 0 0;"></div>
<span id="t97" class="t" style="top:1466.36px;font-size:18.00px;left:2198.12px;transform:translateX(-50%);color:#6b7280;letter-spacing:0.449px;">1/4/2026</span>
<span id="t98" class="t" style="top:1466.36px;font-size:18.00px;left:2295.06px;transform:translateX(-50%);color:#6b7280;letter-spacing:0.521px;">1/9/2026</span>
<span id="t99" class="t" style="top:1466.36px;font-size:18.00px;left:2391.15px;transform:translateX(-50%);color:#6b7280;letter-spacing:0.304px;">1/14/2026</span>
<span id="t100" class="t" style="top:1466.36px;font-size:18.00px;left:2487.95px;transform:translateX(-50%);color:#6b7280;letter-spacing:0.304px;">1/19/2026</span>
<span id="t101" class="t" style="top:1466.36px;font-size:18.00px;left:2584.88px;transform:translateX(-50%);color:#6b7280;letter-spacing:0.554px;">1/24/2026</span>
<span id="t102" class="t" style="top:1466.36px;font-size:18.00px;left:2749.93px;transform:translateX(-50%);color:#6b7280;letter-spacing:0.663px;">2/2/2026</span>
<span id="t103" class="t" style="top:1553.33px;font-size:23.00px;left:2092.50px;color:#6b7280;letter-spacing:0.332px;">Total</span>
<span id="t104" class="t" style="top:1553.33px;font-size:23.00px;left:2149.00px;-webkit-text-stroke:0.41px;letter-spacing:0.496px;">$7,654.93</span>
<div style="left:448.00px;top:1659.00px;width:2393.60px;height:200.00px;background:#fff;border:1.6px solid #e9ebef;border-radius:38.4px;box-sizing:border-box;box-shadow:0 1.6px 4.8px rgba(15,23,42,.055),0 1.6px 2.4px rgba(15,23,42,.025);"></div>
<span id="t105" class="t" style="top:1700.33px;font-size:38.60px;left:490.80px;transform-origin:0 0;transform:scaleX(0.8749);font-weight:700;">Alerts</span>
</div>
</body>
</html>
